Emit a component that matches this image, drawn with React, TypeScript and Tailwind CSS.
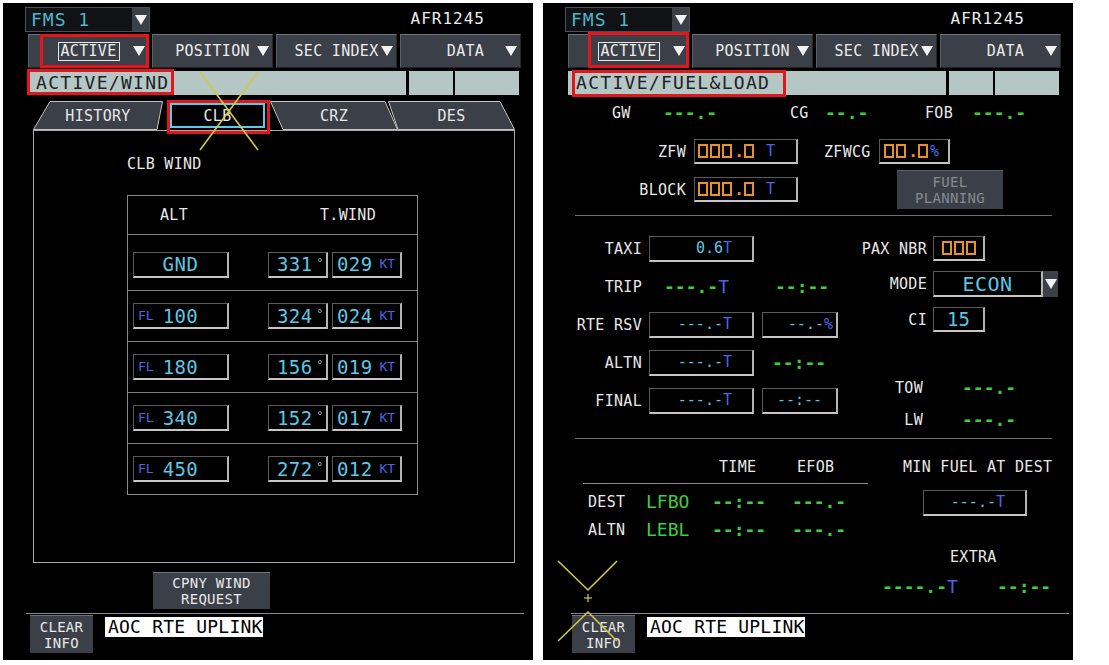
import React from "react";

const BOX =
  "bg-black border-t border-l border-t-[#5a5a5a] border-l-[#5a5a5a] border-b-2 border-r-2 border-b-[#c6c6c6] border-r-[#b4b4b4]";
const LBL = "text-[15px] leading-[18px] text-[#e8e8e8] tracking-[0.3px]";
const GREEN = "text-[18px] leading-[20px] text-[#3ccf3c] font-bold";
const CYAN = "text-[#5cc6e4]";
const BLUE = "text-[#4a66e0]";

function Tri() {
  return (
    <svg viewBox="0 0 12 10" className="w-[12px] h-[10px]">
      <path d="M0 0H12L6 10Z" fill="#f2f2f2" />
    </svg>
  );
}

function MenuBtn({ label, boxed, shift }: { label: string; boxed?: boolean; shift?: string }) {
  return (
    <div className="w-[121px] h-[34px] flex items-center bg-[#3b3f47] border border-t-[#6e727a] border-l-[#5a5e66] border-b-[#202227] border-r-[#26282d]">
      <div className="w-[15px]" />
      <div className={"flex-1 flex justify-center " + (shift || "")}>
        <span
          className={
            "text-[15px] leading-[17px] text-[#ececec] tracking-[0.3px] " +
            (boxed ? "border border-[#e8e8e8] px-[2px]" : "")
          }
        >
          {label}
        </span>
      </div>
      <div className="w-[15px] flex">
        <Tri />
      </div>
    </div>
  );
}

function Top({ title, titleW }: { title: string; titleW: string }) {
  return (
    <>
      <div className="flex items-start h-[30px]">
        <div className="ml-[22px] mt-[4px] w-[125px] h-[25px] flex bg-[#101216] border border-[#4b4f57]">
          <div className="flex-1 pl-[5px] text-[18px] leading-[23px] tracking-[1px] text-[#4db6c9]">FMS 1</div>
          <div className="w-[17px] bg-[#3b3f47] flex items-center justify-center">
            <Tri />
          </div>
        </div>
        <div className="ml-auto mr-[48px] mt-[7px] text-[16px] leading-[18px] tracking-[1px] text-[#ececec]">
          AFR1245
        </div>
      </div>
      <div className="mt-[1px] ml-[25px] flex gap-[3px]">
        <MenuBtn label="ACTIVE" boxed />
        <MenuBtn label="POSITION" />
        <MenuBtn label="SEC INDEX" />
        <MenuBtn label="DATA" shift="pl-[10px]" />
      </div>
      <div className="mt-[3px] ml-[25px] flex h-[24px]">
        <div className={"bg-[#b5c7c5] pl-[8px] text-[18px] leading-[24px] tracking-[1.3px] text-[#1f2225] " + titleW}>
          {title}
        </div>
        <div className="ml-[3px] w-[44px] bg-[#b5c7c5]" />
        <div className="ml-[2px] w-[64px] bg-[#b5c7c5]" />
      </div>
    </>
  );
}

function Footer({ lineMl, btnMl }: { lineMl: string; btnMl: string }) {
  return (
    <>
      <div className={"h-px w-[498px] bg-[#8a8a8a] " + lineMl} />
      <div className="flex mt-[1px]">
        <div
          className={
            "w-[63px] h-[38px] bg-[#3b3f47] border-t border-t-[#6e727a] flex flex-col items-center justify-center text-[14px] leading-[16px] text-[#e8e8e8] tracking-[0.3px] " +
            btnMl
          }
        >
          <span>CLEAR</span>
          <span>INFO</span>
        </div>
        <div className="ml-[12px] mt-[2px] w-[158px] h-[20px] bg-white text-black text-[18px] leading-[20px] pl-[3px] tracking-[0.2px]">
          AOC RTE UPLINK
        </div>
      </div>
    </>
  );
}

function Tab({ w, label, pts, cls }: { w: number; label: string; pts: string; cls: string }) {
  return (
    <div className={"relative h-[29px] flex items-center justify-center " + cls}>
      <svg className="absolute inset-0" width={w} height={29}>
        <polygon points={pts} fill="#3b3f47" stroke="#c4c4c4" strokeWidth="1" />
      </svg>
      <span className={"relative " + LBL}>{label}</span>
    </div>
  );
}

function WindRow({ alt, fl, dir, spd, first }: { alt: string; fl?: boolean; dir: string; spd: string; first?: boolean }) {
  return (
    <div className={"flex items-center border-t border-[#7c7c7c] " + (first ? "h-[56px] pt-[4px]" : "h-[51px]")}>
      <div className={"ml-[5px] w-[96px] h-[26px] flex items-center " + BOX}>
        {fl ? (
          <>
            <span className={"ml-[4px] text-[13px] leading-[14px] " + BLUE}>FL</span>
            <span className={"ml-[9px] text-[19px] leading-[22px] tracking-[0.4px] " + CYAN}>{alt}</span>
          </>
        ) : (
          <span className={"flex-1 text-center text-[19px] leading-[22px] tracking-[0.6px] " + CYAN}>{alt}</span>
        )}
      </div>
      <div className={"ml-[39px] w-[60px] h-[26px] flex items-center " + BOX}>
        <span className={"ml-[8px] text-[19px] leading-[22px] tracking-[0.4px] " + CYAN}>{dir}</span>
        <span className="ml-[4px] text-[11px] leading-[11px] self-start mt-[4px] text-[#9fc8e6]">°</span>
      </div>
      <div className={"ml-[4px] w-[70px] h-[26px] flex items-center " + BOX}>
        <span className={"ml-[4px] text-[19px] leading-[22px] tracking-[0.4px] " + CYAN}>{spd}</span>
        <span className={"ml-[7px] text-[13px] leading-[14px] " + BLUE}>KT</span>
      </div>
    </div>
  );
}

function Rects({ n }: { n: number }) {
  return (
    <>
      {Array.from({ length: n }).map((_, i) => (
        <span key={i} className="inline-block w-[10px] h-[14px] border-2 border-[#e8912c] mr-[2px]" />
      ))}
    </>
  );
}

function Dot() {
  return <span className="inline-block w-[10px] text-[#e8912c] text-[16px] leading-[14px] self-end mb-[3px] text-center font-bold">.</span>;
}

function BoxVal({ v, u, cls }: { v: string; u: string; cls: string }) {
  return (
    <div className={"h-[26px] flex items-center text-[15px] " + cls + " " + BOX}>
      <span className={CYAN}>{v}</span>
      <span className={BLUE}>{u}</span>
    </div>
  );
}

function LeftPanel() {
  return (
    <div className="relative w-[530px] h-[657px] bg-black flex flex-col">
      <Top title="ACTIVE/WIND" titleW="w-[378px]" />
      <div className="mt-[6px] ml-[30px] flex items-start">
        <Tab w={130} label="HISTORY" pts="0.5,28.5 17,0.5 129.5,0.5 124,28.5" cls="w-[130px]" />
        <div className="ml-[7px] mt-[2px] w-[95px] h-[25px] border-2 border-[#5cc8ea] bg-black flex items-center justify-center">
          <span className={LBL}>CLB</span>
        </div>
        <Tab w={128} label="CRZ" pts="0.5,0.5 115,0.5 127.5,28.5 13,28.5" cls="ml-[5px] w-[128px]" />
        <Tab w={127} label="DES" pts="0.5,0.5 112,0.5 126.5,28.5 10,28.5" cls="-ml-[10px] w-[127px]" />
      </div>
      <div className="ml-[30px] w-[482px] h-[433px] border border-[#a8a8a8] pl-[93px] pt-[24px]">
        <div className={LBL}>CLB WIND</div>
        <div className="mt-[22px] w-[291px] border border-[#8a8a8a]">
          <div className="h-[38px] flex items-center">
            <span className={"ml-[32px] w-[160px] " + LBL}>ALT</span>
            <span className={LBL}>T.WIND</span>
          </div>
          <WindRow alt="GND" dir="331" spd="029" first />
          <WindRow alt="100" fl dir="324" spd="024" />
          <WindRow alt="180" fl dir="156" spd="019" />
          <WindRow alt="340" fl dir="152" spd="017" />
          <WindRow alt="450" fl dir="272" spd="012" />
        </div>
      </div>
      <div className="mt-[9px] ml-[150px] w-[117px] h-[37px] bg-[#3b3f47] border-t border-t-[#6e727a] flex flex-col items-center justify-center text-[14px] leading-[16px] text-[#e8e8e8] tracking-[0.3px]">
        <span>CPNY WIND</span>
        <span>REQUEST</span>
      </div>
      <div className="mt-[4px]">
        <Footer lineMl="ml-[23px]" btnMl="ml-[27px]" />
      </div>

      <div className="absolute left-[37px] top-[31px] w-[109px] h-[34px] border-[3px] border-[#e3161b]" />
      <div className="absolute left-[24px] top-[66px] w-[147px] h-[26px] border-[3px] border-[#e3161b]" />
      <div className="absolute left-[164px] top-[97px] w-[103px] h-[34px] border-[3px] border-[#e3161b]" />
      <svg className="absolute left-0 top-0 pointer-events-none" width="530" height="657">
        <line x1="197" y1="69" x2="255" y2="147" stroke="#d2c94a" strokeWidth="1.6" />
        <line x1="255" y1="69" x2="197" y2="147" stroke="#d2c94a" strokeWidth="1.6" />
      </svg>
    </div>
  );
}

function RightPanel() {
  return (
    <div className="relative w-[530px] h-[657px] bg-black flex flex-col">
      <Top title="ACTIVE/FUEL&LOAD" titleW="w-[378px]" />
      <div className="mt-[9px] h-[18px] flex items-center pl-[69px]">
        <span className={"w-[51px] " + LBL}>GW</span>
        <span className={"w-[127px] " + GREEN}>---.-</span>
        <span className={"w-[35px] " + LBL}>CG</span>
        <span className={"w-[100px] " + GREEN}>--.-</span>
        <span className={"w-[47px] " + LBL}>FOB</span>
        <span className={GREEN}>---.-</span>
      </div>
      <div className="mt-[17px] h-[25px] flex items-center">
        <span className={"w-[143px] text-right " + LBL}>ZFW</span>
        <div className={"ml-[8px] w-[104px] h-[25px] flex items-center pl-[3px] " + BOX}>
          <Rects n={3} />
          <Dot />
          <Rects n={1} />
          <span className={"ml-[10px] text-[15px] leading-[16px] " + BLUE}>T</span>
        </div>
        <span className={"ml-[26px] w-[48px] " + LBL}>ZFWCG</span>
        <div className={"ml-[7px] w-[71px] h-[25px] flex items-center pl-[4px] " + BOX}>
          <Rects n={2} />
          <Dot />
          <Rects n={1} />
          <span className={"text-[15px] leading-[16px] " + BLUE}>%</span>
        </div>
      </div>
      <div className="mt-[6px] h-[39px] flex items-center">
        <span className={"w-[143px] text-right " + LBL}>BLOCK</span>
        <div className={"ml-[8px] w-[104px] h-[25px] flex items-center pl-[3px] " + BOX}>
          <Rects n={3} />
          <Dot />
          <Rects n={1} />
          <span className={"ml-[10px] text-[15px] leading-[16px] " + BLUE}>T</span>
        </div>
        <div className="ml-[99px] w-[106px] h-[39px] bg-[#3b3f47] border-t border-t-[#5a5e66] flex flex-col items-center justify-center text-[14px] leading-[16px] text-[#868a92] tracking-[0.3px]">
          <span>FUEL</span>
          <span>PLANNING</span>
        </div>
      </div>
      <div className="mt-[6px] ml-[32px] w-[477px] h-px bg-[#6e6e6e]" />
      <div className="h-[222px] flex">
        <div className="w-[295px] flex flex-col pt-[20px] gap-[12px]">
          <div className="h-[26px] flex items-center">
            <span className={"w-[99px] text-right " + LBL}>TAXI</span>
            <BoxVal v="0.6" u="T" cls="ml-[7px] w-[105px] justify-end pr-[20px]" />
          </div>
          <div className="h-[26px] flex items-center">
            <span className={"w-[99px] text-right " + LBL}>TRIP</span>
            <span className={"ml-[22px] w-[111px] " + GREEN}>
              ---.-<span className={"font-normal " + BLUE}>T</span>
            </span>
            <span className={GREEN}>--:--</span>
          </div>
          <div className="h-[26px] flex items-center">
            <span className={"w-[99px] text-right " + LBL}>RTE RSV</span>
            <BoxVal v="---.-" u="T" cls="ml-[7px] w-[105px] justify-end pr-[20px]" />
            <BoxVal v="--.-" u="%" cls="ml-[8px] w-[76px] justify-end pr-[3px]" />
          </div>
          <div className="h-[26px] flex items-center">
            <span className={"w-[99px] text-right " + LBL}>ALTN</span>
            <BoxVal v="---.-" u="T" cls="ml-[7px] w-[105px] justify-end pr-[20px]" />
            <span className={"ml-[18px] " + GREEN}>--:--</span>
          </div>
          <div className="h-[26px] flex items-center">
            <span className={"w-[99px] text-right " + LBL}>FINAL</span>
            <BoxVal v="---.-" u="T" cls="ml-[7px] w-[105px] justify-end pr-[20px]" />
            <BoxVal v="--:--" u="" cls="ml-[8px] w-[76px] justify-center" />
          </div>
        </div>
        <div className="flex flex-col">
          <div className="mt-[20px] h-[25px] flex items-center">
            <span className={"w-[89px] text-right " + LBL}>PAX NBR</span>
            <div className={"ml-[6px] w-[52px] h-[25px] flex items-center justify-center pl-[2px] " + BOX}>
              <Rects n={3} />
            </div>
          </div>
          <div className="mt-[10px] h-[26px] flex items-center">
            <span className={"w-[89px] text-right " + LBL}>MODE</span>
            <div className="ml-[6px] w-[125px] h-[26px] flex">
              <div className={"flex-1 flex items-center justify-center text-[20px] leading-[22px] tracking-[0.5px] " + CYAN + " " + BOX}>
                ECON
              </div>
              <div className="w-[15px] bg-[#3b3f47] flex items-center justify-center">
                <Tri />
              </div>
            </div>
          </div>
          <div className="mt-[10px] h-[25px] flex items-center">
            <span className={"w-[89px] text-right " + LBL}>CI</span>
            <div className={"ml-[6px] w-[52px] h-[25px] flex items-center justify-center text-[19px] leading-[22px] " + CYAN + " " + BOX}>
              15
            </div>
          </div>
          <div className="mt-[47px] h-[18px] flex items-center">
            <span className={"w-[85px] text-right " + LBL}>TOW</span>
            <span className={"ml-[39px] " + GREEN}>---.-</span>
          </div>
          <div className="mt-[14px] h-[18px] flex items-center">
            <span className={"w-[85px] text-right " + LBL}>LW</span>
            <span className={"ml-[39px] " + GREEN}>---.-</span>
          </div>
        </div>
      </div>
      <div className="ml-[32px] w-[477px] h-px bg-[#6e6e6e]" />
      <div className="h-[174px] flex">
        <div className="w-[332px] flex flex-col">
          <div className="mt-[19px] h-[18px] flex items-center pl-[176px]">
            <span className={"w-[78px] " + LBL}>TIME</span>
            <span className={LBL}>EFOB</span>
          </div>
          <div className="mt-[7px] ml-[40px] w-[285px] h-px bg-[#8a8a8a]" />
          <div className="mt-[8px] h-[20px] flex items-center pl-[45px]">
            <span className={"w-[58px] " + LBL}>DEST</span>
            <span className="w-[66px] text-[18px] leading-[20px] text-[#3ccf3c]">LFBO</span>
            <span className={"w-[80px] " + GREEN}>--:--</span>
            <span className={GREEN}>---.-</span>
          </div>
          <div className="mt-[8px] h-[20px] flex items-center pl-[45px]">
            <span className={"w-[58px] " + LBL}>ALTN</span>
            <span className="w-[66px] text-[18px] leading-[20px] text-[#3ccf3c]">LEBL</span>
            <span className={"w-[80px] " + GREEN}>--:--</span>
            <span className={GREEN}>---.-</span>
          </div>
        </div>
        <div className="flex flex-col">
          <div className={"mt-[19px] ml-[28px] h-[18px] " + LBL}>MIN FUEL AT DEST</div>
          <BoxVal v="---.-" u="T" cls="mt-[14px] ml-[48px] w-[104px] justify-end pr-[20px]" />
          <div className={"mt-[32px] ml-[75px] h-[18px] " + LBL}>EXTRA</div>
          <div className="mt-[11px] ml-[7px] h-[20px] flex items-center">
            <span className={"w-[115px] " + GREEN}>
              ----.-<span className={"font-normal " + BLUE}>T</span>
            </span>
            <span className={GREEN}>--:--</span>
          </div>
        </div>
      </div>
      <Footer lineMl="ml-[28px]" btnMl="ml-[29px]" />

      <div className="absolute left-[45px] top-[29px] w-[101px] h-[36px] border-[3px] border-[#e3161b]" />
      <div className="absolute left-[29px] top-[67px] w-[214px] h-[27px] border-[3px] border-[#e3161b]" />
      <svg className="absolute left-0 top-0 pointer-events-none" width="530" height="657">
        <polyline points="15,558 45,587 74,558" fill="none" stroke="#d2c94a" strokeWidth="1.6" />
        <line x1="45" y1="591" x2="45" y2="599" stroke="#d2c94a" strokeWidth="1.2" />
        <line x1="41" y1="595" x2="49" y2="595" stroke="#d2c94a" strokeWidth="1.2" />
        <polyline points="15,638 45,609 74,638" fill="none" stroke="#d2c94a" strokeWidth="1.6" />
      </svg>
    </div>
  );
}

export default function App() {
  return (
    <div className="w-[1109px] h-[665px] bg-white flex gap-[10px] pt-[3px] pl-[3px] font-['DejaVu_Sans_Mono',monospace]">
      <LeftPanel />
      <RightPanel />
    </div>
  );
}
